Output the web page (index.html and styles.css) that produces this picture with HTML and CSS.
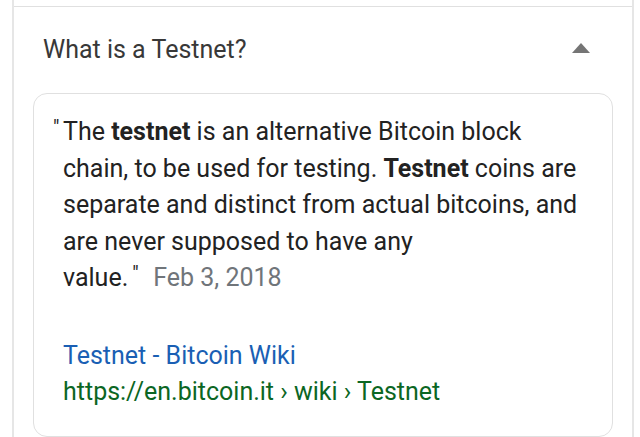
FILE: index.html
```html
<!DOCTYPE html>
<html>
<head>
<meta charset="utf-8">
<link rel="stylesheet" href="styles.css">
</head>
<body>
<div class="card">
  <div class="prev"></div>
  <div class="question">
    <span class="q-text">What is a Testnet?</span>
    <svg class="caret" width="18" height="10" viewBox="0 0 18 10"><path d="M0 10 L9 0 L18 10 Z" fill="#757575"/></svg>
  </div>
  <div class="answer">
    <p class="quote"><span class="qm">"</span>The <b>testnet</b> is an alternative Bitcoin block chain, to be used for testing. <b>Testnet</b> coins are separate and distinct from actual bitcoins, and are never supposed to have any <span class="nowrap">value.<span class="qm qm-end">"</span><span class="date">Feb 3, 2018</span></span></p>
    <div class="source">
      <div class="title">Testnet - Bitcoin Wiki</div>
      <div class="url">https://en.bitcoin.it › wiki › Testnet</div>
    </div>
  </div>
</div>
</body>
</html>
```

FILE: styles.css
```css
html, body {
  margin: 0;
  padding: 0;
  background: #ffffff;
}
body {
  font-family: Roboto, "Noto Sans", sans-serif;
  color: #222222;
  overflow: hidden;
}
.card {
  margin-left: 12px;
  width: 622px;
  height: 460px;
  border-left: 2px solid #e6e6e6;
  border-right: 2px solid #e6e6e6;
  box-sizing: border-box;
}
.prev {
  height: 6px;
  border-bottom: 1px solid #e0e0e0;
}
.question {
  height: 86px;
  display: flex;
  align-items: center;
  justify-content: space-between;
  padding: 0 42px 0 29px;
}
.q-text {
  font-size: 25px;
  color: #383838;
  margin-top: -2px;
}
.caret {
  margin-top: -5px;
}
.answer {
  margin-left: 19px;
  width: 580px;
  border: 1px solid #e0e0e0;
  border-radius: 14px;
  box-sizing: border-box;
  padding: 20px 20px 26px 29px;
}
.quote {
  margin: 0;
  font-size: 25px;
  line-height: 36.5px;
  color: #222222;
}
.quote b {
  font-weight: 700;
  color: #222;
}
.nowrap {
  white-space: nowrap;
}
.qm {
  font-size: 20px;
  display: inline-block;
  width: 10px;
  margin-left: -10px;
  vertical-align: 6px;
  line-height: 1;
  color: #222;
}
.qm-end {
  margin-left: 4px;
  width: 21px;
}
.date {
  color: #70757a;
}
.source {
  margin-top: 41px;
  font-size: 25px;
  line-height: 36px;
}
.title {
  color: #1a5fb4;
}
.url {
  color: #0b6623;
}
```
